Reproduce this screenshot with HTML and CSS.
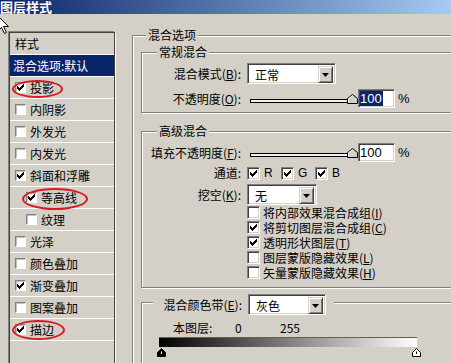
FILE: index.html
```html
<!DOCTYPE html>
<html lang="zh-CN">
<head>
  <meta charset="UTF-8" />
  <meta name="viewport" content="width=device-width, initial-scale=1.0"/>
  <title>图层样式</title>
  <link rel="stylesheet" href="styles.css">
</head>
<body>
  <div class="dialog">
    <div class="titlebar">图层样式</div>

    <div class="main">
      <!-- 样式列表 -->
      <div class="style-list">
        <div class="row head">样式</div>
        <div class="row selected">混合选项:默认</div>
        <div class="row"><span class="box on"><svg viewBox="0 0 7 7"><path d="M0 2v3h1v1h1v1h1v-1h1v-1h1v-1h1v-1h1V0h-1v1h-1v1h-1v1h-1v1h-1v-1h-1v-1z"/></svg></span>投影</div>
        <div class="row"><span class="box"></span>内阴影</div>
        <div class="row"><span class="box"></span>外发光</div>
        <div class="row"><span class="box"></span>内发光</div>
        <div class="row"><span class="box on"><svg viewBox="0 0 7 7"><path d="M0 2v3h1v1h1v1h1v-1h1v-1h1v-1h1v-1h1V0h-1v1h-1v1h-1v1h-1v1h-1v-1h-1v-1z"/></svg></span>斜面和浮雕</div>
        <div class="row sub"><span class="box on"><svg viewBox="0 0 7 7"><path d="M0 2v3h1v1h1v1h1v-1h1v-1h1v-1h1v-1h1V0h-1v1h-1v1h-1v1h-1v1h-1v-1h-1v-1z"/></svg></span>等高线</div>
        <div class="row sub"><span class="box"></span>纹理</div>
        <div class="row"><span class="box"></span>光泽</div>
        <div class="row"><span class="box"></span>颜色叠加</div>
        <div class="row"><span class="box on"><svg viewBox="0 0 7 7"><path d="M0 2v3h1v1h1v1h1v-1h1v-1h1v-1h1v-1h1V0h-1v1h-1v1h-1v1h-1v1h-1v-1h-1v-1z"/></svg></span>渐变叠加</div>
        <div class="row"><span class="box"></span>图案叠加</div>
        <div class="row"><span class="box on"><svg viewBox="0 0 7 7"><path d="M0 2v3h1v1h1v1h1v-1h1v-1h1v-1h1v-1h1V0h-1v1h-1v1h-1v1h-1v1h-1v-1h-1v-1z"/></svg></span>描边</div>
      </div>

      <!-- 混合选项 -->
      <div class="group outer">
        <span class="legend">混合选项</span>

        <div class="group normal">
          <span class="legend">常规混合</span>
          <div class="field">
            <label>混合模式(<u>B</u>):</label>
            <div class="select mode">
              <span class="value">正常</span>
              <span class="drop"><svg viewBox="0 0 7 4"><path d="M0 0h7L3.5 4z"/></svg></span>
            </div>
          </div>
          <div class="field slim">
            <label>不透明度(<u>O</u>):</label>
            <div class="slider">
              <div class="track"></div>
              <svg class="thumb" viewBox="0 0 11 10"><path d="M0.5 9.5V4.5L5.5 0.5L10.5 4.5V9.5Z" fill="#d4d0c8" stroke="#000"/><path d="M1.5 8.5V5L5.5 1.8" fill="none" stroke="#fff"/></svg>
            </div>
            <div class="num"><span class="picked">100</span></div>
            <span class="pct">%</span>
          </div>
        </div>

        <div class="group advanced">
          <span class="legend">高级混合</span>
          <div class="field slim">
            <label>填充不透明度(<u>F</u>):</label>
            <div class="slider">
              <div class="track"></div>
              <svg class="thumb" viewBox="0 0 11 10"><path d="M0.5 9.5V4.5L5.5 0.5L10.5 4.5V9.5Z" fill="#d4d0c8" stroke="#000"/><path d="M1.5 8.5V5L5.5 1.8" fill="none" stroke="#fff"/></svg>
            </div>
            <div class="num">100</div>
            <span class="pct">%</span>
          </div>
          <div class="field channels">
            <label>通道:</label>
            <div class="ch"><span class="cb"><svg viewBox="0 0 7 7"><path d="M0 2v3h1v1h1v1h1v-1h1v-1h1v-1h1v-1h1V0h-1v1h-1v1h-1v1h-1v1h-1v-1h-1v-1z"/></svg></span><span>R</span></div>
            <div class="ch"><span class="cb"><svg viewBox="0 0 7 7"><path d="M0 2v3h1v1h1v1h1v-1h1v-1h1v-1h1v-1h1V0h-1v1h-1v1h-1v1h-1v1h-1v-1h-1v-1z"/></svg></span><span>G</span></div>
            <div class="ch"><span class="cb"><svg viewBox="0 0 7 7"><path d="M0 2v3h1v1h1v1h1v-1h1v-1h1v-1h1v-1h1V0h-1v1h-1v1h-1v1h-1v1h-1v-1h-1v-1z"/></svg></span><span>B</span></div>
          </div>
          <div class="field">
            <label>挖空(<u>K</u>):</label>
            <div class="select knockout">
              <span class="value">无</span>
              <span class="drop"><svg viewBox="0 0 7 4"><path d="M0 0h7L3.5 4z"/></svg></span>
            </div>
          </div>
          <div class="options">
            <div class="opt"><span class="cb"></span>将内部效果混合成组(<u>I</u>)</div>
            <div class="opt"><span class="cb"><svg viewBox="0 0 7 7"><path d="M0 2v3h1v1h1v1h1v-1h1v-1h1v-1h1v-1h1V0h-1v1h-1v1h-1v1h-1v1h-1v-1h-1v-1z"/></svg></span>将剪切图层混合成组(<u>C</u>)</div>
            <div class="opt"><span class="cb"><svg viewBox="0 0 7 7"><path d="M0 2v3h1v1h1v1h1v-1h1v-1h1v-1h1v-1h1V0h-1v1h-1v1h-1v1h-1v1h-1v-1h-1v-1z"/></svg></span>透明形状图层(<u>T</u>)</div>
            <div class="opt"><span class="cb"></span>图层蒙版隐藏效果(<u>L</u>)</div>
            <div class="opt"><span class="cb"></span>矢量蒙版隐藏效果(<u>H</u>)</div>
          </div>
        </div>

        <div class="group band">
          <div class="legend band-legend">
            <label>混合颜色带(<u>E</u>):</label>
            <div class="select gray">
              <span class="value">灰色</span>
              <span class="drop"><svg viewBox="0 0 7 4"><path d="M0 0h7L3.5 4z"/></svg></span>
            </div>
          </div>
          <div class="layer-row">
            <span class="layer-label">本图层:</span>
            <span class="lo">0</span>
            <span>255</span>
          </div>
          <div class="ramp"></div>
          <div class="stops">
            <svg viewBox="0 0 9 9"><path d="M0.5 8.5V4.5L4.5 0.5L8.5 4.5V8.5Z" fill="#000" stroke="#000"/><path d="M4.5 3.5V6" stroke="#fff"/></svg>
            <svg viewBox="0 0 9 9"><path d="M0.5 8.5V4.5L4.5 0.5L8.5 4.5V8.5Z" fill="#fff" stroke="#000"/><path d="M4.5 3.5V6" stroke="#000"/></svg>
          </div>
        </div>
      </div>
    </div>

    <!-- 鼠标指针 -->
    <svg class="cursor" viewBox="0 0 12 19"><path d="M0.5 0.5V16.5L4.5 12.5L7.5 18.5L9.5 17.5L6.5 11.5H11.5Z" fill="#fff" stroke="#000"/></svg>

    <!-- 红色标注圈 -->
    <div class="mark m1"></div>
    <div class="mark m2"></div>
    <div class="mark m3"></div>
  </div>
</body>
</html>
```

FILE: styles.css
```css
body {
  margin: 0;
  padding: 0;
  background: #d4d0c8;
  font-family: "Noto Sans CJK SC", "Liberation Sans", sans-serif;
  font-size: 12px;
  line-height: 14px;
  color: #000;
}
.dialog {
  position: relative;
  width: 451px;
  height: 363px;
  overflow: hidden;
  background: #d4d0c8;
}
.titlebar {
  height: 14px;
  line-height: 14px;
  font-size: 13px;
  font-weight: bold;
  color: #ffffff;
  background: linear-gradient(to right, #0a246a, #a6caf0);
  white-space: nowrap;
}
.main {
  display: flex;
  align-items: flex-start;
}

/* 样式列表 */
.style-list {
  margin: 18px 0 0 9px;
  width: 104px;
  height: 340px;
  border: 1px solid #404040;
  box-shadow: -1px -1px 0 #808080, 1px 1px 0 #ffffff;
  flex-shrink: 0;
}
.row {
  height: 21px;
  border-bottom: 1px solid #ffffff;
  display: flex;
  align-items: center;
  padding-left: 5px;
  white-space: nowrap;
}
.row.selected {
  background: #0a246a;
  color: #ffffff;
  padding-left: 3px;
}
.row.sub {
  padding-left: 16px;
}
.box {
  width: 11px;
  height: 11px;
  box-sizing: border-box;
  margin-right: 4px;
  background: #ffffff;
  border: 1px solid;
  border-color: #808080 #ffffff #ffffff #808080;
  box-shadow: inset 1px 1px 0 #c0c0c0;
  display: flex;
  align-items: center;
  justify-content: center;
}
.box svg,
.cb svg {
  width: 7px;
  height: 7px;
  shape-rendering: crispEdges;
}

/* 分组框 */
.group {
  position: relative;
  box-sizing: border-box;
  border: 1px solid #808080;
  box-shadow: inset 1px 1px 0 #ffffff, 1px 1px 0 #ffffff;
}
.legend {
  position: absolute;
  top: -8px;
  left: 15px;
  padding: 0 2px;
  line-height: 14px;
  background: #d4d0c8;
  white-space: nowrap;
}
.outer {
  margin: 21px 0 0 17px;
  width: 340px;
  height: 340px;
  padding: 16px 0 0 8px;
  flex-shrink: 0;
}
.outer > .legend {
  left: 13px;
}
.outer > .group {
  width: 330px;
}
.normal {
  padding: 10px 0 4px;
}
.advanced {
  margin-top: 18px;
  padding: 11px 0 7px;
}
.band {
  margin-top: 14px;
  padding-top: 18px;
  height: 80px;
}

/* 表单行 */
.field {
  display: flex;
  align-items: center;
  height: 21px;
  white-space: nowrap;
}
.field.slim {
  height: 19px;
  margin-top: 5px;
}
.advanced .field.slim {
  margin-top: 0;
}
.field.channels {
  height: 22px;
}
.field label {
  width: 99px;
  text-align: right;
  flex-shrink: 0;
}
.field label + * {
  margin-left: 6px;
}
.field label + .slider {
  margin-left: 9px;
}

.select {
  height: 21px;
  box-sizing: border-box;
  background: #ffffff;
  border: 1px solid;
  border-color: #808080 #ffffff #ffffff #808080;
  box-shadow: inset 1px 1px 0 #404040, inset -1px -1px 0 #d4d0c8;
  padding: 2px;
  display: flex;
}
.select.mode {
  width: 89px;
}
.select.knockout {
  width: 70px;
}
.select.gray {
  width: 78px;
}
.select .value {
  flex: 1;
  padding-left: 5px;
  line-height: 17px;
}
.drop {
  width: 15px;
  height: 17px;
  box-sizing: border-box;
  background: #d4d0c8;
  border: 1px solid;
  border-color: #d4d0c8 #404040 #404040 #d4d0c8;
  box-shadow: inset 1px 1px 0 #ffffff, inset -1px -1px 0 #808080;
  display: flex;
  align-items: center;
  justify-content: center;
}
.drop svg {
  width: 7px;
  height: 4px;
}

.slider {
  position: relative;
  width: 107px;
  height: 19px;
}
.track {
  margin-top: 10px;
  width: 100px;
  height: 2px;
  border: 1px solid #000000;
  background: #f0f0f0;
}
.thumb {
  position: absolute;
  left: 97px;
  top: 5px;
  width: 11px;
  height: 10px;
}
.num {
  width: 37px;
  height: 19px;
  box-sizing: border-box;
  margin-left: 1px;
  padding: 1px 0 0 1px;
  background: #ffffff;
  border: 1px solid;
  border-color: #808080 #ffffff #ffffff #808080;
  box-shadow: inset 1px 1px 0 #404040, inset -1px -1px 0 #d4d0c8;
  font-family: "Liberation Sans", sans-serif;
  font-size: 13px;
  line-height: 15px;
}
.picked {
  background: #0a246a;
  color: #ffffff;
  padding-right: 1px;
}
.pct {
  margin-left: 3px;
  font-family: "Liberation Sans", sans-serif;
  font-size: 13px;
}

/* 复选框 */
.cb {
  width: 13px;
  height: 13px;
  box-sizing: border-box;
  flex-shrink: 0;
  background: #ffffff;
  border: 1px solid;
  border-color: #808080 #ffffff #ffffff #808080;
  box-shadow: inset 1px 1px 0 #404040, inset -1px -1px 0 #d4d0c8;
  display: flex;
  align-items: center;
  justify-content: center;
}
.ch {
  display: flex;
  align-items: center;
  width: 34px;
  font-family: "Liberation Sans", sans-serif;
}
.ch .cb + span {
  margin-left: 4px;
}
.options {
  padding-left: 105px;
}
.opt {
  height: 15px;
  line-height: 13px;
  display: flex;
  align-items: center;
  white-space: nowrap;
}
.opt .cb {
  margin-right: 3px;
}

/* 混合颜色带 */
.band-legend {
  top: -9px;
  left: 11px;
  display: flex;
  align-items: center;
  padding: 0 8px 0 2px;
}
.band-legend label {
  width: 87px;
  text-align: right;
  margin-right: 6px;
}
.layer-row {
  height: 14px;
  line-height: 14px;
  display: flex;
  padding-left: 31px;
  white-space: nowrap;
}
.layer-label {
  width: 62px;
}
.lo {
  width: 45px;
}
.ramp {
  margin: 2px 0 0 17px;
  width: 258px;
  height: 9px;
  border-top: 1px solid #606060;
  background: linear-gradient(to right, #000000, #ffffff);
}
.stops {
  display: flex;
  justify-content: space-between;
  width: 264px;
  margin: 1px 0 0 15px;
}
.stops svg {
  width: 9px;
  height: 9px;
}

/* 指针与标注 */
.cursor {
  position: absolute;
  left: -3px;
  top: 15px;
  width: 12px;
  height: 19px;
}
.mark {
  position: absolute;
  box-sizing: border-box;
  border: 2px solid #dc1820;
  border-radius: 50%;
}
.m1 {
  left: 12px;
  top: 80px;
  width: 51px;
  height: 18px;
}
.m2 {
  left: 22px;
  top: 188px;
  width: 66px;
  height: 22px;
}
.m3 {
  left: 12px;
  top: 320px;
  width: 53px;
  height: 20px;
}
```
